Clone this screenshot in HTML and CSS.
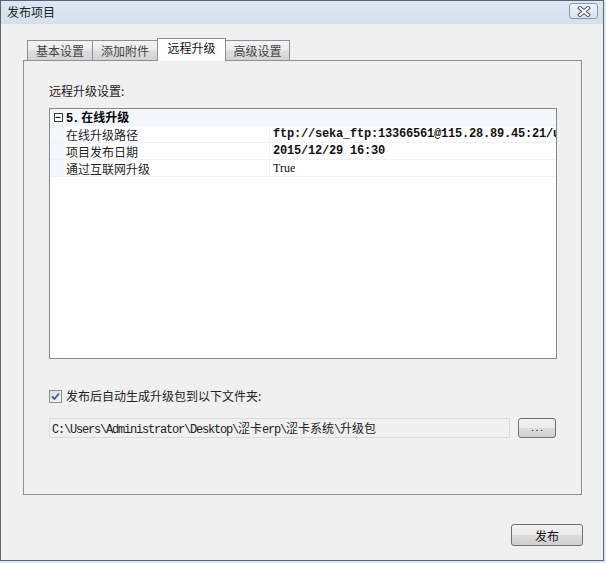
FILE: index.html
```html
<!DOCTYPE html>
<html lang="zh-CN">
<head>
    <meta charset="UTF-8">
    <title>发布项目</title>
    <link rel="stylesheet" href="styles.css">
</head>
<body>
    <div class="window">
        <div class="titlebar">
            <span class="title">发布项目</span>
            <button class="close-btn">
                <svg width="14" height="11" viewBox="0 0 14 11">
                    <path d="M3 2 L11 9 M11 2 L3 9" stroke="#4b5564" stroke-width="4" stroke-linecap="square"/>
                    <path d="M3 2 L11 9 M11 2 L3 9" stroke="#ffffff" stroke-width="2" stroke-linecap="square"/>
                </svg>
            </button>
        </div>

        <div class="client">
            <div class="tabs">
                <div class="tab tab-1">基本设置</div>
                <div class="tab tab-2">添加附件</div>
                <div class="tab tab-3 active">远程升级</div>
                <div class="tab tab-4">高级设置</div>
            </div>

            <div class="panel">
                <p class="section-label">远程升级设置:</p>

                <div class="grid">
                    <div class="row category">
                        <span class="gutter"><span class="toggle">−</span></span>
                        <span class="cat-name"><b>5.</b> 在线升级</span>
                    </div>
                    <div class="row">
                        <span class="gutter"></span>
                        <span class="name">在线升级路径</span>
                        <span class="value bold">ftp://seka_ftp:13366561@115.28.89.45:21/u</span>
                    </div>
                    <div class="row">
                        <span class="gutter"></span>
                        <span class="name">项目发布日期</span>
                        <span class="value bold">2015/12/29 16:30</span>
                    </div>
                    <div class="row">
                        <span class="gutter"></span>
                        <span class="name">通过互联网升级</span>
                        <span class="value">True</span>
                    </div>
                </div>

                <label class="check-row">
                    <span class="checkbox">
                        <svg width="9" height="9" viewBox="0 0 9 9">
                            <path d="M1 4.5 L3.5 7 L8 1.5" stroke="#3d5a9e" stroke-width="1.8" fill="none"/>
                        </svg>
                    </span>
                    发布后自动生成升级包到以下文件夹:
                </label>

                <div class="path-row">
                    <div class="path-box"><span class="mono">C:\Users\Administrator\Desktop\</span>涩卡<span class="mono">erp\</span>涩卡系统<span class="mono">\</span>升级包</div>
                    <button class="btn btn-browse">. . .</button>
                </div>
            </div>

            <div class="actions">
                <button class="btn btn-publish">发布</button>
            </div>
        </div>
    </div>
</body>
</html>
```

FILE: styles.css
```css
body {
    margin: 0;
    padding: 0;
    width: 606px;
    height: 563px;
    background-color: #dfe8f3;
    font-family: "Noto Sans CJK SC", "DejaVu Sans", sans-serif;
    font-size: 12px;
    color: #1b1b1b;
    overflow: hidden;
}

.window {
    width: 602px;
    height: 559px;
    border: 1px solid #5b6470;
    background-color: #f0f0f0;
    display: flex;
    flex-direction: column;
}

/* Title bar */
.titlebar {
    height: 23px;
    background: linear-gradient(#dde7f3, #d4e0ee);
    display: flex;
    align-items: center;
    justify-content: space-between;
    padding: 0 5px 0 6px;
}

.title {
    font-size: 12px;
    color: #222;
    line-height: 14px;
    margin-top: -1px;
}

.close-btn {
    width: 29px;
    height: 16px;
    margin-top: -3px;
    padding: 0;
    border: 1px solid #8a98ab;
    border-radius: 3px;
    background: linear-gradient(#eef3f9, #d9e3ef);
    display: flex;
    align-items: center;
    justify-content: center;
}

/* Client area */
.client {
    flex: 1;
    padding: 13px 21px 0 22px;
    display: flex;
    flex-direction: column;
}

.tabs {
    display: flex;
    align-items: flex-end;
    padding-left: 4px;
    height: 23px;
}

.tab {
    height: 19px;
    border: 1px solid #8c8f96;
    border-bottom: none;
    margin-right: -1px;
    background: linear-gradient(#f3f3f3 0%, #ebebeb 45%, #dcdcdc 55%, #d4d4d4 100%);
    color: #444;
    display: flex;
    align-items: center;
    justify-content: center;
    line-height: 14px;
}

.tab-1 { width: 64px; }
.tab-2 { width: 64px; }
.tab-3 { width: 69px; }
.tab-4 { width: 63px; }

.tab.active {
    height: 23px;
    background: #ffffff;
    color: #111;
    position: relative;
    z-index: 1;
    margin-bottom: -1px;
    align-items: flex-start;
    padding-top: 2px;
    box-sizing: border-box;
}

.panel {
    height: 433px;
    border: 1px solid #8c8f96;
    padding: 0 24px 0 25px;
    display: flex;
    flex-direction: column;
}

.section-label {
    margin: 23px 0 0 0;
    line-height: 14px;
    color: #222;
}

/* Property grid */
.grid {
    margin-top: 10px;
    height: 249px;
    border: 1px solid #848891;
    background: #ffffff;
    overflow: hidden;
}

.row {
    display: flex;
    height: 16px;
    border-bottom: 1px solid #eef1f6;
    background: #ffffff;
}

.row.category {
    background: #f4f7fc;
    font-weight: bold;
}

.gutter {
    width: 14px;
    flex-shrink: 0;
    background: #f4f7fc;
    display: flex;
    align-items: center;
    justify-content: center;
}

.toggle {
    width: 7px;
    height: 7px;
    border: 1px solid #3c3c3c;
    font-size: 9px;
    line-height: 6px;
    font-family: "DejaVu Sans Mono", monospace;
    font-weight: bold;
    text-align: center;
    color: #111;
    background: #fff;
    margin-left: 2px;
}

.cat-name {
    padding-left: 2px;
    line-height: 16px;
    color: #000;
}

.cat-name b {
    font-family: "Liberation Mono", monospace;
    letter-spacing: -1px;
}

.name {
    width: 203px;
    flex-shrink: 0;
    padding-left: 2px;
    line-height: 17px;
    border-right: 1px solid #eef1f6;
    color: #1e1e1e;
}

.value {
    padding-left: 3px;
    font-family: "Liberation Serif", serif;
    font-size: 12px;
    line-height: 17px;
    white-space: nowrap;
    overflow: hidden;
    color: #111;
}

.value.bold {
    font-family: "Liberation Mono", monospace;
    font-weight: bold;
    letter-spacing: -0.2px;
}

/* Checkbox row */
.check-row {
    margin-top: 30px;
    display: flex;
    align-items: center;
    gap: 4px;
    line-height: 14px;
    color: #222;
}

.checkbox {
    width: 11px;
    height: 11px;
    border: 1px solid #8f8f8f;
    background: linear-gradient(135deg, #dcdcdc, #f8f8f8);
    display: flex;
    align-items: center;
    justify-content: center;
}

/* Path row */
.path-row {
    margin-top: 15px;
    display: flex;
    align-items: center;
    gap: 8px;
}

.path-box {
    width: 457px;
    height: 18px;
    border: 1px solid #dcdcdc;
    background: #f0f0f0;
    padding-left: 2px;
    line-height: 18px;
    white-space: nowrap;
    overflow: hidden;
    color: #222;
}

.mono {
    font-family: "Liberation Mono", monospace;
    letter-spacing: -1.2px;
}

.btn {
    border: 1px solid #707070;
    border-radius: 3px;
    background: linear-gradient(#f2f2f2 0%, #ebebeb 48%, #dddddd 52%, #cfcfcf 100%);
    font-family: "Noto Sans CJK SC", sans-serif;
    font-size: 12px;
    color: #111;
    padding: 0;
}

.btn-browse {
    width: 38px;
    height: 20px;
    line-height: 10px;
    font-size: 9px;
}

.actions {
    display: flex;
    justify-content: flex-end;
    margin-top: 29px;
}

.btn-publish {
    width: 72px;
    height: 22px;
    margin-right: -1px;
}
```
